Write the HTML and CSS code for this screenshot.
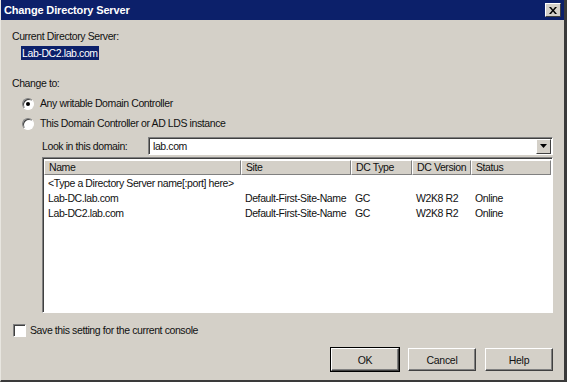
FILE: index.html
```html
<!DOCTYPE html>
<html lang="en">
<head>
  <meta charset="UTF-8" />
  <title>Change Directory Server</title>
  <link rel="stylesheet" href="styles.css">
</head>
<body>

  <div class="window">
    <div class="titlebar">
      <span class="title">Change Directory Server</span>
      <span class="close">
        <svg width="8" height="7" viewBox="0 0 8 7"><path d="M0 0h2l2 2.5L6 0h2L5 3.5 8 7H6L4 4.5 2 7H0l3-3.5z" fill="#000"/></svg>
      </span>
    </div>

    <div class="content">
      <div class="label">Current Directory Server:</div>
      <div class="current"><span class="selected">Lab-DC2.lab.com</span></div>

      <div class="label change">Change to:</div>

      <div class="option">
        <span class="radio checked"></span>
        <span>Any writable Domain Controller</span>
      </div>
      <div class="option">
        <span class="radio"></span>
        <span>This Domain Controller or AD LDS instance</span>
      </div>

      <div class="lookin">
        <span class="lookin-label">Look in this domain:</span>
        <div class="combo">
          <span class="combo-text">lab.com</span>
          <span class="combo-btn">
            <svg width="7" height="4" viewBox="0 0 7 4"><path d="M0 0h7L3.5 4z" fill="#000"/></svg>
          </span>
        </div>
      </div>

      <div class="listview">
        <div class="list-head">
          <span>Name</span>
          <span>Site</span>
          <span>DC Type</span>
          <span>DC Version</span>
          <span class="last">Status</span>
        </div>
        <div class="list-row">
          <span class="wide">&lt;Type a Directory Server name[:port] here&gt;</span>
        </div>
        <div class="list-row">
          <span>Lab-DC.lab.com</span>
          <span>Default-First-Site-Name</span>
          <span>GC</span>
          <span>W2K8 R2</span>
          <span>Online</span>
        </div>
        <div class="list-row">
          <span>Lab-DC2.lab.com</span>
          <span>Default-First-Site-Name</span>
          <span>GC</span>
          <span>W2K8 R2</span>
          <span>Online</span>
        </div>
      </div>

      <div class="save">
        <span class="checkbox"></span>
        <span>Save this setting for the current console</span>
      </div>

      <div class="buttons">
        <button class="default">OK</button>
        <button>Cancel</button>
        <button>Help</button>
      </div>
    </div>
  </div>

</body>
</html>
```

FILE: styles.css
```css
body {
  margin: 0;
  background: #d4d0c8;
  font-family: "Liberation Sans", Arial, sans-serif;
  font-size: 10.5px;
  letter-spacing: -0.4px;
  color: #111;
}
.window {
  width: 567px;
  height: 382px;
  box-sizing: border-box;
  background: #d4d0c8;
  border-right: 3px solid #3a3a3a;
  border-bottom: 2px solid #3a3a3a;
  border-left: 1px solid #e8e6e0;
  overflow: hidden;
}
.titlebar {
  height: 20px;
  background: #0c206a;
  display: flex;
  align-items: center;
  justify-content: space-between;
  padding: 0 3px 0 3px;
}
.title {
  color: #fff;
  font-weight: bold;
  font-size: 11px;
  letter-spacing: -0.15px;
}
.close {
  width: 14px;
  height: 12px;
  background: #d4d0c8;
  border: 1px solid;
  border-color: #fff #404040 #404040 #fff;
  display: flex;
  align-items: center;
  justify-content: center;
}
.content {
  padding: 0 0 0 11px;
}
.label {
  line-height: 13px;
  margin-top: 10px;
}
.current {
  margin-top: 3px;
  padding-left: 9px;
  line-height: 13px;
}
.selected {
  background: #0c206a;
  color: #fff;
  padding: 0 1px;
  display: inline-block;
  line-height: 14px;
}
.change {
  margin-top: 17px;
}
.option {
  display: flex;
  align-items: center;
  gap: 6px;
  padding-left: 10px;
  margin-top: 7px;
  line-height: 13px;
}
.radio {
  width: 10px;
  height: 10px;
  border-radius: 50%;
  background: #fff;
  border: 1px solid;
  border-color: #808080 #fff #fff #808080;
  box-shadow: inset 1px 1px 0 #404040;
  position: relative;
}
.radio.checked::after {
  content: "";
  position: absolute;
  left: 3px;
  top: 3px;
  width: 4px;
  height: 4px;
  border-radius: 50%;
  background: #000;
}
.lookin {
  display: flex;
  align-items: center;
  margin-top: 7px;
  padding-left: 30px;
}
.lookin-label {
  width: 106px;
}
.combo {
  width: 405px;
  height: 18px;
  box-sizing: border-box;
  background: #fff;
  border: 1px solid;
  border-color: #808080 #fff #fff #808080;
  box-shadow: inset 1px 1px 0 #404040;
  display: flex;
  align-items: center;
  justify-content: space-between;
  padding: 0 1px 0 4px;
}
.combo-btn {
  width: 13px;
  height: 13px;
  background: #d4d0c8;
  border: 1px solid;
  border-color: #fff #404040 #404040 #fff;
  display: flex;
  align-items: center;
  justify-content: center;
}
.listview {
  margin: 2px 0 0 30px;
  width: 511px;
  height: 156px;
  box-sizing: border-box;
  background: #fff;
  border: 1px solid;
  border-color: #808080 #fff #fff #808080;
  box-shadow: inset 1px 1px 0 #404040;
  padding: 2px 0 0 1px;
}
.list-head,
.list-row {
  display: grid;
  grid-template-columns: 197px 110px 61px 59px 80px;
}
.list-head span {
  background: #d4d0c8;
  border: 1px solid;
  border-color: #fff #808080 #808080 #fff;
  line-height: 13px;
  padding-left: 4px;
  white-space: nowrap;
  overflow: hidden;
}
.list-head {
  margin-bottom: 1px;
}
.list-row {
  line-height: 15px;
}
.list-row span {
  padding-left: 4px;
  white-space: nowrap;
}
.list-row .wide {
  grid-column: 1 / 4;
}
.save {
  display: flex;
  align-items: center;
  gap: 4px;
  margin-top: 11px;
  padding-left: 1px;
  line-height: 13px;
}
.checkbox {
  width: 11px;
  height: 11px;
  background: #fff;
  border: 1px solid;
  border-color: #808080 #fff #fff #808080;
  box-shadow: inset 1px 1px 0 #404040;
}
.buttons {
  display: flex;
  justify-content: flex-end;
  gap: 9px;
  margin-top: 11px;
  padding-right: 11px;
}
button {
  width: 68px;
  height: 23px;
  font-family: "Liberation Sans", Arial, sans-serif;
  font-size: 10.5px;
  letter-spacing: -0.3px;
  color: #111;
  background: #d4d0c8;
  border: 1px solid;
  border-color: #fff #404040 #404040 #fff;
  box-shadow: inset -1px -1px 0 #808080;
  padding: 0;
}
button.default {
  outline: 1px solid #000;
  outline-offset: 0;
}
```
